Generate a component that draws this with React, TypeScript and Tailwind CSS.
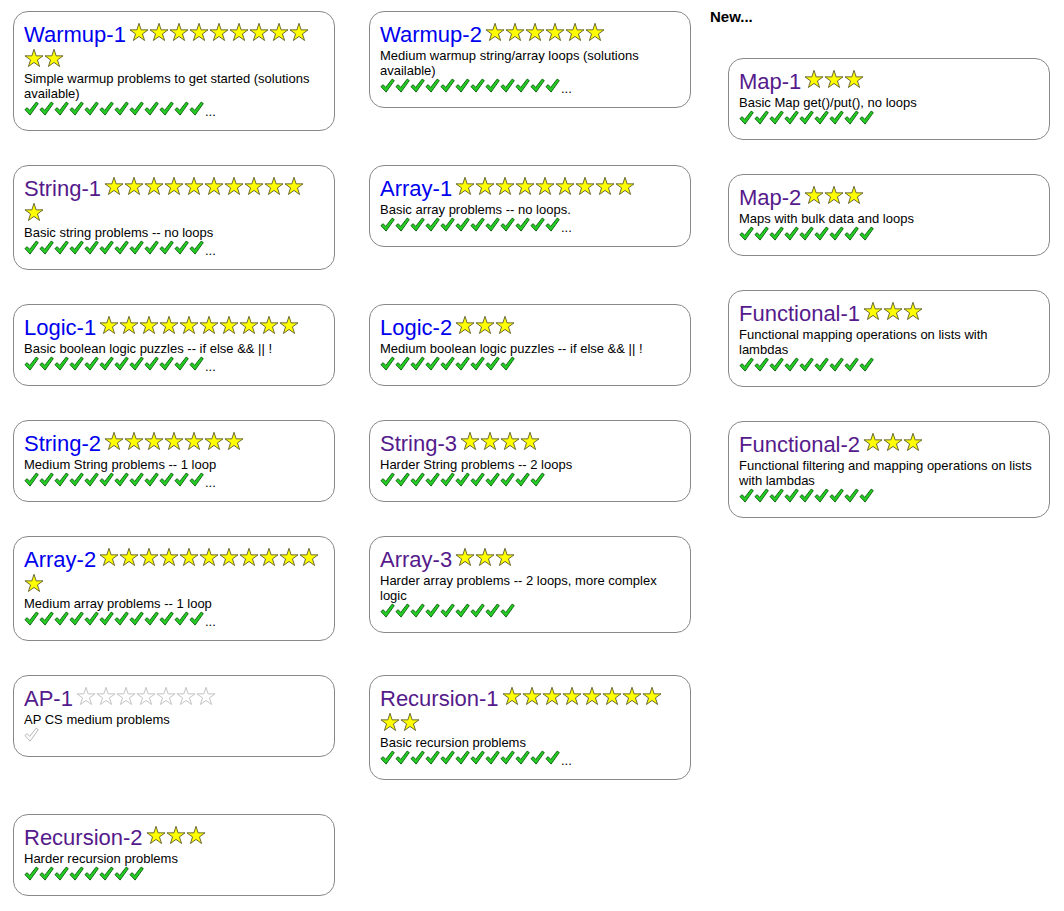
import React from "react";

type Card = {
  t: string;
  visited: boolean;
  s: number;
  d: string;
  c: number;
  more?: boolean;
  empty?: boolean;
};

const rows: [Card, Card | null][] = [
  [
    { t: "Warmup-1", visited: false, s: 11, d: "Simple warmup problems to get started (solutions available)", c: 12, more: true },
    { t: "Warmup-2", visited: false, s: 6, d: "Medium warmup string/array loops (solutions available)", c: 12, more: true },
  ],
  [
    { t: "String-1", visited: true, s: 11, d: "Basic string problems -- no loops", c: 12, more: true },
    { t: "Array-1", visited: false, s: 9, d: "Basic array problems -- no loops.", c: 12, more: true },
  ],
  [
    { t: "Logic-1", visited: false, s: 10, d: "Basic boolean logic puzzles -- if else && || !", c: 12, more: true },
    { t: "Logic-2", visited: false, s: 3, d: "Medium boolean logic puzzles -- if else && || !", c: 9 },
  ],
  [
    { t: "String-2", visited: false, s: 7, d: "Medium String problems -- 1 loop", c: 12, more: true },
    { t: "String-3", visited: true, s: 4, d: "Harder String problems -- 2 loops", c: 11 },
  ],
  [
    { t: "Array-2", visited: false, s: 12, d: "Medium array problems -- 1 loop", c: 12, more: true },
    { t: "Array-3", visited: true, s: 3, d: "Harder array problems -- 2 loops, more complex logic", c: 9 },
  ],
  [
    { t: "AP-1", visited: true, s: 7, d: "AP CS medium problems", c: 1, empty: true },
    { t: "Recursion-1", visited: true, s: 10, d: "Basic recursion problems", c: 12, more: true },
  ],
  [{ t: "Recursion-2", visited: true, s: 3, d: "Harder recursion problems", c: 8 }, null],
];

const newCards: Card[] = [
  { t: "Map-1", visited: true, s: 3, d: "Basic Map get()/put(), no loops", c: 9 },
  { t: "Map-2", visited: true, s: 3, d: "Maps with bulk data and loops", c: 9 },
  { t: "Functional-1", visited: true, s: 3, d: "Functional mapping operations on lists with lambdas", c: 9 },
  { t: "Functional-2", visited: true, s: 3, d: "Functional filtering and mapping operations on lists with lambdas", c: 9 },
];

function Star({ empty }: { empty?: boolean }) {
  return (
    <svg width="20" height="20" viewBox="0 0 20 20" className="inline align-baseline">
      <polygon
        points="10,1.3 12.13,7.86 19.03,7.86 13.45,11.92 15.58,18.49 10,14.43 4.42,18.49 6.55,11.92 0.97,7.86 7.87,7.86"
        fill={empty ? "#ffffff" : "#ffff00"}
        stroke={empty ? "#bdbdbd" : "#5a5a2a"}
        strokeWidth="0.9"
        strokeLinejoin="round"
      />
    </svg>
  );
}

function Check({ empty }: { empty?: boolean }) {
  return (
    <svg width="15" height="15" viewBox="0 0 15 15" className="inline align-baseline">
      <path
        d="M0.9 8.6 L3.2 6.7 L5.7 9.4 L12.2 1.1 L14.3 2.6 L6.1 14.1 Z"
        fill={empty ? "#ffffff" : "#22cc22"}
        stroke={empty ? "#b0b0b0" : "#0b5d0b"}
        strokeWidth="0.9"
        strokeLinejoin="round"
      />
    </svg>
  );
}

function Summ({ card }: { card: Card }) {
  return (
    <div className="w-[322px] rounded-[15px] border border-[#888888] bg-white px-[10px] pt-[9px] pb-[11px] text-[13px] leading-[15px] text-black">
      <span
        className={
          "text-[22px] leading-[27px] " + (card.visited ? "text-[#551a8b]" : "text-[#0000ee]")
        }
      >
        {card.t}
      </span>
      <span className="inline-block w-[3px]" />
      {Array.from({ length: card.s }).map((_, i) => (
        <Star key={i} empty={card.empty} />
      ))}
      <br />
      {card.d}
      <br />
      {Array.from({ length: card.c }).map((_, i) => (
        <Check key={i} empty={card.empty} />
      ))}
      {card.more ? <span className="ml-[1px]">...</span> : null}
    </div>
  );
}

export default function App() {
  return (
    <div
      className="flex min-h-[911px] items-start bg-white pl-[13px]"
      style={{ fontFamily: '"Liberation Sans", Arial, sans-serif' }}
    >
      <div className="mt-[11px] grid grid-cols-[322px_322px] items-start gap-x-[34px] gap-y-[34px]">
        {rows.map((r, i) => (
          <React.Fragment key={i}>
            <Summ card={r[0]} />
            {r[1] ? <Summ card={r[1]} /> : <div />}
          </React.Fragment>
        ))}
      </div>
      <div className="ml-[19px] pt-[8px]">
        <div className="text-[15px] font-bold leading-[18px] text-black">New...</div>
        <div className="ml-[18px] mt-[32px] flex flex-col gap-[34px]">
          {newCards.map((c) => (
            <Summ key={c.t} card={c} />
          ))}
        </div>
      </div>
    </div>
  );
}
